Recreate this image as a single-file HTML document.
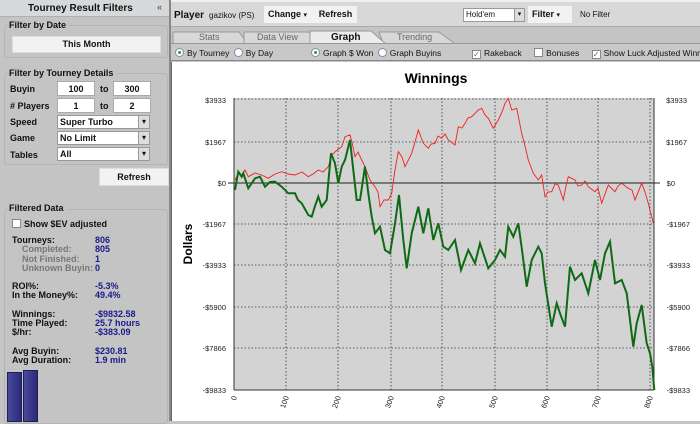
<!DOCTYPE html>
<html><head><meta charset="utf-8"><style>
*{margin:0;padding:0;box-sizing:border-box}
body{width:700px;height:421px;overflow:hidden;background:#c4c4c4;font-family:"Liberation Sans","DejaVu Sans",sans-serif;font-size:9px;color:#111;position:relative}
.a{position:absolute}
.b{font-weight:bold}
.box{position:absolute;background:#fff;border:1px solid #aaa;font-size:9px;font-weight:bold;text-align:center;line-height:14px}
.sel{position:absolute;background:#fff;border:1px solid #999;font-size:9px;font-weight:bold;padding-left:2px;line-height:12px;height:14px}
.sel:after{content:"▾";position:absolute;right:0;top:0;width:10px;height:12px;background:#ddd;border-left:1px solid #999;text-align:center;font-size:8px}
.grp{position:absolute;border:1px solid #b4b4b4;border-radius:3px}
.lbl{position:absolute;font-weight:bold;font-size:9px;background:#c4c4c4;padding-right:3px}
.blue{color:#1a1a8c;font-weight:bold}
.gr{color:#777;font-weight:bold}
.rad{display:inline-block;width:9px;height:9px;border:1px solid #8090a8;border-radius:50%;background:#fff;vertical-align:-1px;margin-right:3px;position:relative}
.rad.on:after{content:"";position:absolute;left:2px;top:2px;width:3px;height:3px;border-radius:50%;background:#2a2}
.chk{display:inline-block;width:9px;height:9px;border:1px solid #888;background:#fff;vertical-align:-1px;margin-right:3px;font-size:8px;line-height:8px;text-align:center;color:#666}
</style></head><body>
<!-- left panel -->
<div class="a" style="left:0;top:0;width:170px;height:17px;background:#d6d8da;border-bottom:1px solid #b0b0b0"></div>
<div class="a b" style="left:28px;top:3px;font-size:10px">Tourney Result Filters</div>
<div class="a b" style="left:157px;top:2px;color:#666">«</div>
<div class="grp" style="left:4px;top:25px;width:164px;height:33px"></div>
<div class="lbl" style="left:9px;top:20px">Filter by Date</div>
<div class="a b" style="left:12px;top:36px;width:149px;height:17px;background:#f2f2f2;border:1px solid #ddd;text-align:center;line-height:15px">This Month</div>
<div class="grp" style="left:4px;top:73px;width:164px;height:92px"></div>
<div class="lbl" style="left:9px;top:68px">Filter by Tourney Details</div>
<div class="a b" style="left:10px;top:84px">Buyin</div>
<div class="box" style="left:57px;top:81px;width:38px;height:15px">100</div>
<div class="a b" style="left:100px;top:84px">to</div>
<div class="box" style="left:113px;top:81px;width:38px;height:15px">300</div>
<div class="a b" style="left:10px;top:101px"># Players</div>
<div class="box" style="left:57px;top:98px;width:38px;height:15px">1</div>
<div class="a b" style="left:100px;top:101px">to</div>
<div class="box" style="left:113px;top:98px;width:38px;height:15px">2</div>
<div class="a b" style="left:10px;top:117px">Speed</div>
<div class="sel" style="left:57px;top:115px;width:93px">Super Turbo</div>
<div class="a b" style="left:10px;top:133px">Game</div>
<div class="sel" style="left:57px;top:131px;width:93px">No Limit</div>
<div class="a b" style="left:10px;top:150px">Tables</div>
<div class="sel" style="left:57px;top:147px;width:93px">All</div>
<div class="a b" style="left:99px;top:168px;width:70px;height:18px;background:#f2f2f2;border:1px solid #ddd;text-align:center;line-height:16px">Refresh</div>
<div class="grp" style="left:4px;top:209px;width:164px;height:215px"></div>
<div class="lbl" style="left:9px;top:203px">Filtered Data</div>
<div class="a b" style="left:12px;top:219px"><span class="chk"></span>Show $EV adjusted</div>
<div class="a" style="left:12px;top:236px;line-height:9.3px">
<div class="b">Tourneys:</div><div class="gr" style="padding-left:10px">Completed:</div><div class="gr" style="padding-left:10px">Not Finished:</div><div class="gr" style="padding-left:10px">Unknown Buyin:</div>
<div style="height:9px"></div><div class="b">ROI%:</div><div class="b">In the Money%:</div>
<div style="height:9px"></div><div class="b">Winnings:</div><div class="b">Time Played:</div><div class="b">$/hr:</div>
<div style="height:9px"></div><div class="b">Avg Buyin:</div><div class="b">Avg Duration:</div></div>
<div class="a blue" style="left:95px;top:236px;line-height:9.3px">
<div>806</div><div>805</div><div>1</div><div>0</div><div style="height:9px"></div><div>-5.3%</div><div>49.4%</div><div style="height:9px"></div><div>-$9832.58</div><div>25.7 hours</div><div>-$383.09</div><div style="height:9px"></div><div>$230.81</div><div>1.9 min</div></div>
<div class="a" style="left:7px;top:372px;width:15px;height:50px;background:linear-gradient(90deg,#4a4aa0,#2a2a78);border:1px solid #202050"></div>
<div class="a" style="left:23px;top:370px;width:15px;height:52px;background:linear-gradient(90deg,#4a4aa0,#2a2a78);border:1px solid #202050"></div>
<div class="a" style="left:169px;top:0;width:2px;height:421px;background:#888"></div>
<!-- top bar -->
<div class="a" style="left:171px;top:0;width:529px;height:27px;background:#d8d8d8;border-top:2px solid #f0f0f0;border-bottom:1px solid #aaa"></div>
<div class="a b" style="left:174px;top:10px;font-size:10px">Player</div>
<div class="a" style="left:209px;top:11px;font-size:8px">gazikov (PS)</div>
<div class="a b" style="left:264px;top:6px;width:50px;height:17px;background:#f2f2f2;line-height:17px;padding-left:4px">Change <span style="font-size:7px">▾</span></div>
<div class="a b" style="left:314px;top:6px;width:43px;height:17px;background:#f2f2f2;line-height:17px;text-align:center">Refresh</div>
<div class="a" style="left:463px;top:8px;width:62px;height:14px;background:#fff;border:1px solid #999;font-size:8px;line-height:12px;padding-left:2px">Hold'em<span style="position:absolute;right:0;top:0;width:10px;height:12px;background:#ddd;border-left:1px solid #999;text-align:center;font-size:7px">▾</span></div>
<div class="a b" style="left:528px;top:6px;width:44px;height:17px;background:#f2f2f2;line-height:17px;padding-left:4px">Filter <span style="font-size:7px">▾</span></div>
<div class="a" style="left:580px;top:10px;font-size:8px">No Filter</div>
<!-- tabs -->
<svg class="a" style="left:171px;top:27px" width="529" height="17">
<rect width="529" height="17" fill="#c4c4c4"/>
<path d="M2 16 L2 5 L68 5 L76 16" fill="#d8d8d8" stroke="#999"/>
<path d="M73 16 L73 5 L138 5 L145 16" fill="#d8d8d8" stroke="#999"/>
<path d="M212 16 L208 5 L268 5 L283 16" fill="#d8d8d8" stroke="#999"/>
<path d="M139 17 L139 4 L200 4 L215 17" fill="#ececec" stroke="#999"/>
<line x1="0" y1="16.5" x2="529" y2="16.5" stroke="#999"/>
<text x="28" y="13" font-size="9" fill="#666" font-family="Liberation Sans">Stats</text>
<text x="86" y="13" font-size="9" fill="#666" font-family="Liberation Sans">Data View</text>
<text x="160" y="13" font-size="10" font-weight="bold" fill="#111" font-family="Liberation Sans">Graph</text>
<text x="226" y="13" font-size="9" fill="#666" font-family="Liberation Sans">Trending</text>
</svg>
<div class="a" style="left:171px;top:44px;width:529px;height:17px;background:#c8c8c8;border-bottom:1px solid #888"></div>
<div class="a" style="left:175px;top:48px;font-size:8.5px"><span class="rad on"></span>By Tourney <span class="rad" style="margin-left:2px"></span>By Day</div>
<div class="a" style="left:311px;top:48px;font-size:8.5px"><span class="rad on"></span>Graph $ Won <span class="rad" style="margin-left:2px"></span>Graph Buyins</div>
<div class="a" style="left:472px;top:48px;font-size:8.5px;white-space:nowrap"><span class="chk">✓</span>Rakeback <span class="chk" style="margin-left:10px"></span>Bonuses <span class="chk" style="margin-left:10px">✓</span>Show Luck Adjusted Winnings</div>
<!-- chart -->
<div class="a" style="left:171px;top:62px;width:529px;height:359px;background:#fff;border-left:1px solid #666"></div>
<svg class="a" style="left:0;top:0" width="700" height="421" font-family="Liberation Sans">
<text x="436" y="83" font-size="14" font-weight="bold" text-anchor="middle">Winnings</text>
<text transform="translate(192,244) rotate(-90)" font-size="12" font-weight="bold" text-anchor="middle">Dollars</text>
<rect x="234" y="98" width="420" height="292" fill="#d3d3d3"/>
<g stroke="#333" stroke-width="0.8" stroke-dasharray="1.5,2">
<line x1="234" y1="142" x2="654" y2="142"/><line x1="234" y1="224" x2="654" y2="224"/><line x1="234" y1="265" x2="654" y2="265"/><line x1="234" y1="307" x2="654" y2="307"/><line x1="234" y1="348" x2="654" y2="348"/><line x1="234" y1="99" x2="654" y2="99"/>
<line x1="286" y1="98" x2="286" y2="390"/><line x1="338" y1="98" x2="338" y2="390"/><line x1="391" y1="98" x2="391" y2="390"/><line x1="442" y1="98" x2="442" y2="390"/><line x1="495" y1="98" x2="495" y2="390"/><line x1="547" y1="98" x2="547" y2="390"/><line x1="598" y1="98" x2="598" y2="390"/><line x1="650" y1="98" x2="650" y2="390"/>
</g>
<line x1="228" y1="183" x2="660" y2="183" stroke="#222"/>
<line x1="234" y1="98" x2="234" y2="390" stroke="#333"/><line x1="654" y1="98" x2="654" y2="390" stroke="#333"/>
<line x1="234" y1="390" x2="654" y2="390" stroke="#333"/>
<g font-size="7.5" fill="#222" text-anchor="end">
<text x="226" y="103">$3933</text><text x="226" y="145">$1967</text><text x="226" y="186">$0</text><text x="226" y="227">-$1967</text><text x="226" y="268">-$3933</text><text x="226" y="310">-$5900</text><text x="226" y="351">-$7866</text><text x="226" y="393">-$9833</text>
</g>
<g font-size="7.5" fill="#222" text-anchor="end">
<text x="687" y="103">$3933</text><text x="687" y="145">$1967</text><text x="675" y="186">$0</text><text x="690" y="227">-$1967</text><text x="690" y="268">-$3933</text><text x="690" y="310">-$5900</text><text x="690" y="351">-$7866</text><text x="690" y="393">-$9833</text>
</g>
<g font-size="7.5" fill="#222" text-anchor="end">
<text transform="translate(237,397) rotate(-70)">0</text><text transform="translate(289,397) rotate(-70)">100</text><text transform="translate(341,397) rotate(-70)">200</text><text transform="translate(394,397) rotate(-70)">300</text><text transform="translate(445,397) rotate(-70)">400</text><text transform="translate(498,397) rotate(-70)">500</text><text transform="translate(550,397) rotate(-70)">600</text><text transform="translate(601,397) rotate(-70)">700</text><text transform="translate(653,397) rotate(-70)">800</text>
</g>
<polyline fill="none" stroke="#f02020" stroke-width="0.9" points="235,180 238.3,173.3 242,175 245,170 248.3,176.7 255,173 261.7,175 268.3,178.3 275,174 281.7,171.7 288,174 295,175 302,172 308.3,176.7 313,174 318.3,170 323,172 328.3,166.7 331.7,155 336,151 341.7,146.7 345,136.7 350,135 352,142 355,156.7 358,152 361.7,160 365,166.7 370,180 375,186.7 378,192 380,206.7 384,200 388.3,200 391.7,193.3 395,170 398.3,151.7 402,157 405,166.7 411.7,153.3 415,142 418.3,130 423.3,143.3 428.3,148.3 431,144 435,143.3 438,136 441.7,138.3 445,134 448.3,140 455,145 458.3,126.7 462,128 465,123.3 468,118 471.7,116.7 478.3,110 481.7,108.3 485,115 488.3,118.3 493.3,128.3 498.3,120 502,112 505,103.3 508.3,98.3 511.7,110 516.7,108.3 521.7,133.3 525,146 528.3,160 533.3,173.3 538.3,180 541.7,175 545,196.7 548,192 551.7,191.7 555,184 558.3,185 563.3,200 566,186 568.3,176.7 575,180 578,186 581.7,185 585,181 588.3,186.7 595,191.7 598,188 601.7,203.3 605,194 608.3,185 615,191.7 618,186 621.7,183.3 628.3,188.3 632,190 635,200 641.7,183.3 645,192 648.3,203.3 653.3,223.3"/>
<polyline fill="none" stroke="#0e6a14" stroke-width="2" points="235,190 238.3,171.7 241.7,176.7 243.3,173.3 248.3,188.3 255,178.3 260,176.7 265,186.7 270,182 275,181.7 281.7,186.7 288.3,193.3 295,193.3 298,200 301.7,203.3 308.3,215 311.7,216.7 315,206 318.3,196.7 321.7,206.7 326.7,200 331,153.3 335,163.3 338.3,183.3 341.7,166.7 345,160 350,140 353.3,170 356.7,200 360,200 365,166.7 368.3,193.3 371.7,216.7 375,233.3 380,226.7 385,250 390,253.3 395,223.3 399,195 403.3,240 406.7,268.3 411.7,233.3 418.3,206.7 423.3,233.3 428.3,208.3 433.3,240 438.3,223.3 443.3,246.7 448.3,250 455,240 461,270 468.3,250 475,263.3 480,243.3 488.3,268.3 495,260 500,250 505,256.7 508.3,226.7 513.3,236.7 518.3,223.3 522,250 526.7,286.7 531.7,260 538.3,246.7 541.7,253.3 545,283.3 551.7,326.7 556.7,303.3 560,313.3 565,326.7 570,266.7 575,280 581.7,273.3 588.3,293.3 595,260 600,280 605,253.3 610,241.7 615,283.3 621.7,280 626.7,293.3 633.3,346.7 636.7,323.3 641.7,305 646.7,343.3 650,353.3 652.3,366.7 654.3,390"/>
</svg>
</body></html>
